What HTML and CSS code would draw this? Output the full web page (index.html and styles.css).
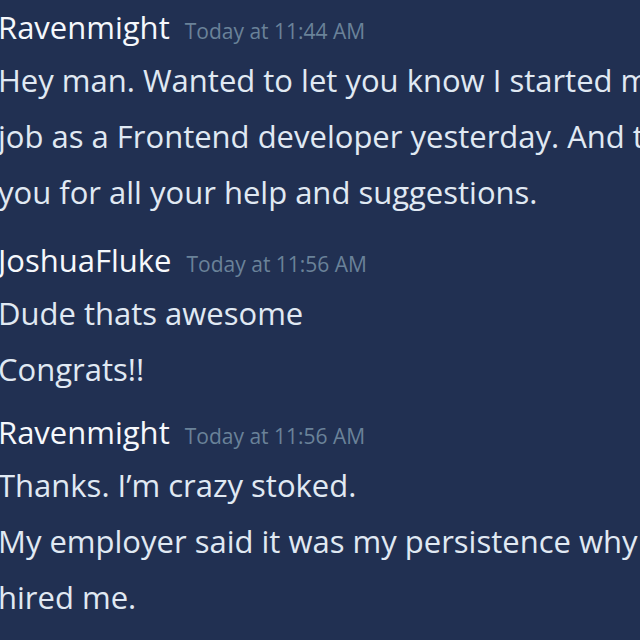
FILE: index.html
```html
<!DOCTYPE html>
<html>
<head>
<meta charset="utf-8">
<link rel="stylesheet" href="styles.css">
</head>
<body>
<div class="chat">
  <div class="group g1">
    <div class="header"><span class="name">Ravenmight</span><span class="time">Today at 11:44 AM</span></div>
    <div class="msg">Hey man. Wanted to let you know I started my new<br>job as a Frontend developer yesterday. And thank<br>you for all your help and suggestions.</div>
  </div>
  <div class="group g2">
    <div class="header"><span class="name">JoshuaFluke</span><span class="time">Today at 11:56 AM</span></div>
    <div class="msg">Dude thats awesome</div>
    <div class="msg">Congrats!!</div>
  </div>
  <div class="group g3">
    <div class="header"><span class="name">Ravenmight</span><span class="time">Today at 11:56 AM</span></div>
    <div class="msg">Thanks. I’m crazy stoked.</div>
    <div class="msg">My employer said it was my persistence why they<br>hired me.</div>
  </div>
</div>
</body>
</html>
```
FILE: styles.css
```css
html, body {
  margin: 0;
  padding: 0;
  background: #213052;
  width: 640px;
  height: 640px;
  overflow: hidden;
}
.chat {
  display: flex;
  flex-direction: column;
  margin-left: -2px;
  padding-top: 2px;
  font-family: "Open Sans", "Noto Sans", sans-serif;
}
.group {
  display: flex;
  flex-direction: column;
}
.header {
  display: flex;
  align-items: baseline;
  gap: 15px;
  height: 50px;
}
.name {
  color: #f6f8fc;
  font-size: 31px;
  font-weight: 500;
  line-height: 50px;
  white-space: nowrap;
}
.time {
  color: #6a8299;
  font-size: 21px;
  white-space: nowrap;
}
.msg {
  color: #e0e9f3;
  font-size: 31px;
  line-height: 56px;
  white-space: nowrap;
}
.g2 {
  margin-top: 15px;
}
.g3 {
  margin-top: 10px;
}
```
